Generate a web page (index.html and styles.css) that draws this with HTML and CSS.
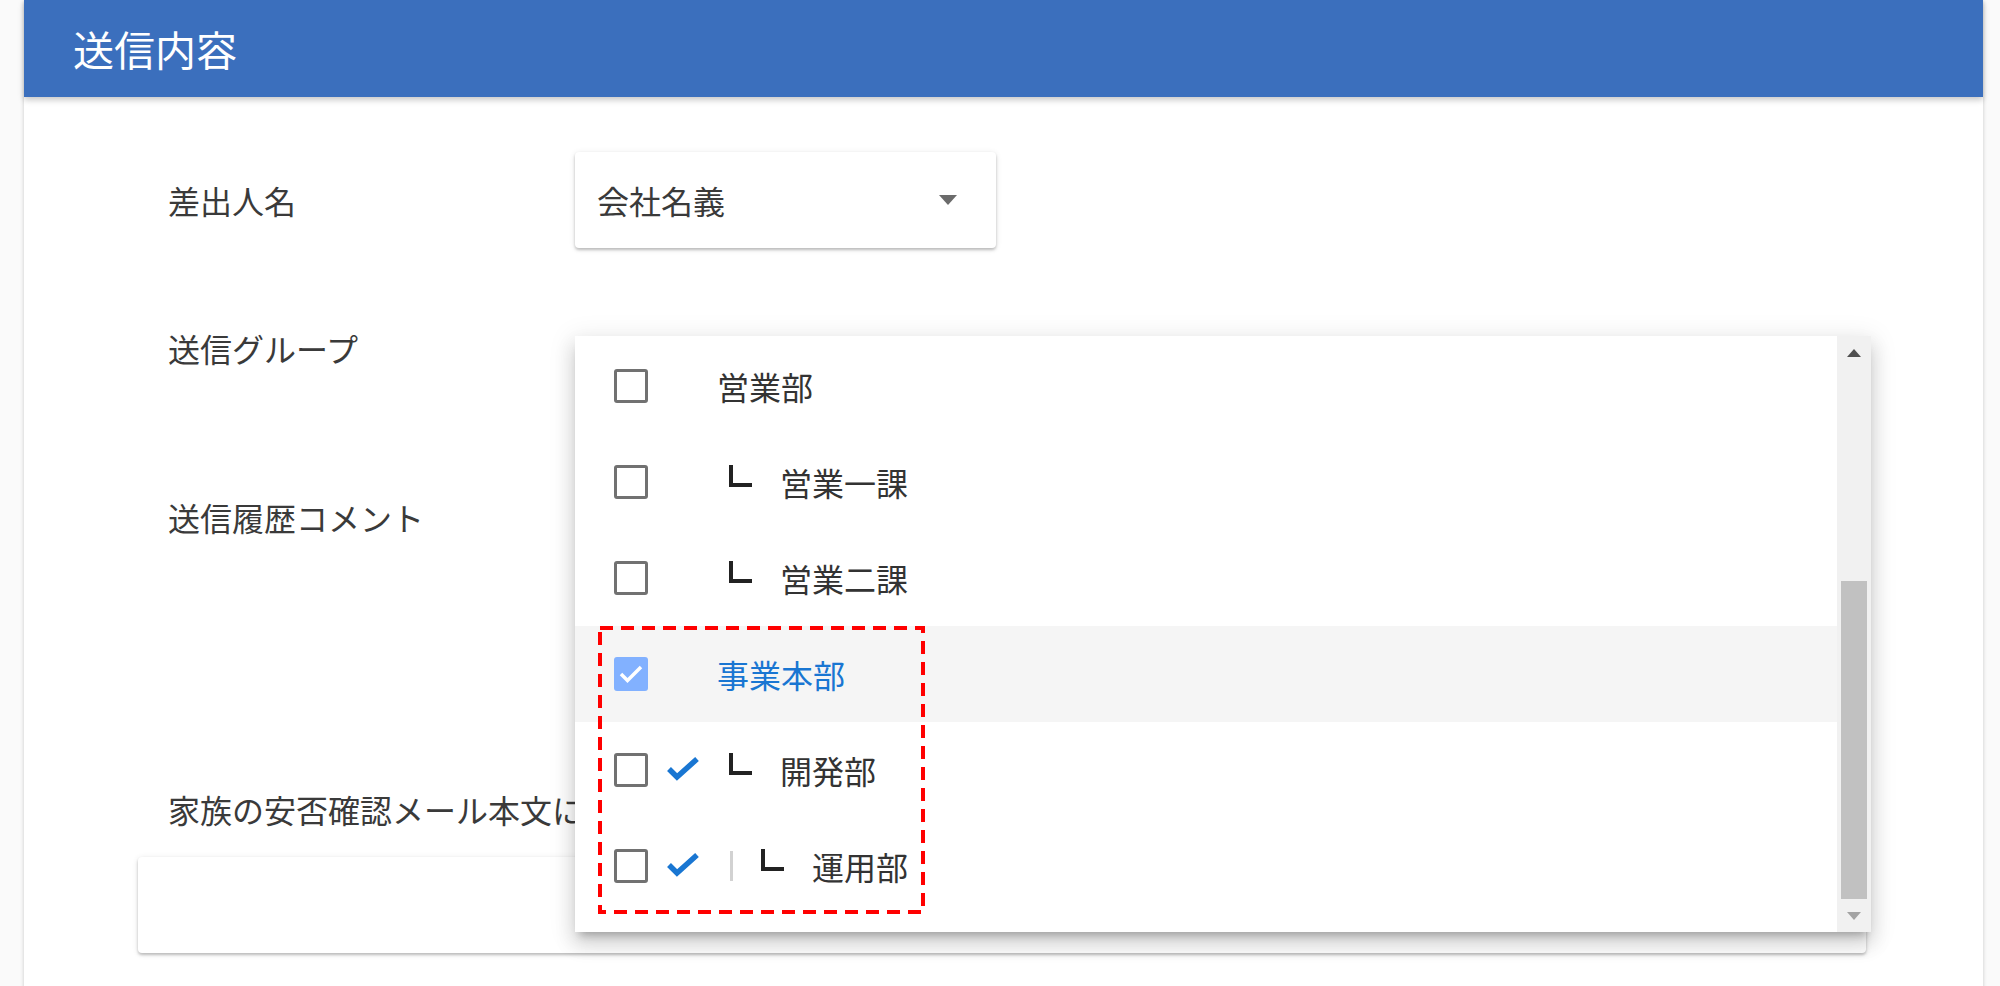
FILE: index.html
```html
<!DOCTYPE html>
<html lang="ja">
  <head>
    <meta charset="UTF-8" />
    <meta name="viewport" content="width=device-width, initial-scale=1.0" />
    <title>送信内容</title>
    <link rel="stylesheet" href="styles.css">
  </head>
  <body>
    <div class="card">
      <div class="card-header">送信内容</div>
      <div class="card-body">
        <div class="form-row row-sender">
          <div class="form-label">差出人名</div>
          <div class="select-box">
            <span>会社名義</span>
            <span class="caret"></span>
          </div>
        </div>
        <div class="form-row row-group">
          <div class="form-label">送信グループ</div>
        </div>
        <div class="form-row row-comment">
          <div class="form-label">送信履歴コメント</div>
        </div>
        <div class="form-label label-family">家族の安否確認メール本文に</div>
        <div class="text-box"></div>

        <!-- 送信グループ dropdown (open) -->
        <div class="group-menu">
          <div class="menu-list">
            <div class="menu-item">
              <span class="cb"></span>
              <span class="mark"></span>
              <span class="item-label">営業部</span>
            </div>
            <div class="menu-item">
              <span class="cb"></span>
              <span class="mark"></span>
              <span class="item-label"><span class="branch"></span>営業一課</span>
            </div>
            <div class="menu-item">
              <span class="cb"></span>
              <span class="mark"></span>
              <span class="item-label"><span class="branch"></span>営業二課</span>
            </div>
            <div class="menu-item hover">
              <span class="cb checked">
                <svg viewBox="0 0 34 34" width="34" height="34"><polyline points="7,17 13.5,23.5 27,10" fill="none" stroke="#fff" stroke-width="3.5"/></svg>
              </span>
              <span class="mark"></span>
              <span class="item-label selected">事業本部</span>
            </div>
            <div class="menu-item">
              <span class="cb"></span>
              <span class="mark">
                <svg viewBox="0 0 42 42" width="42" height="42"><polyline points="7,20 15,28 35,10" fill="none" stroke="#1976d2" stroke-width="5.5"/></svg>
              </span>
              <span class="item-label"><span class="branch"></span>開発部</span>
            </div>
            <div class="menu-item">
              <span class="cb"></span>
              <span class="mark">
                <svg viewBox="0 0 42 42" width="42" height="42"><polyline points="7,20 15,28 35,10" fill="none" stroke="#1976d2" stroke-width="5.5"/></svg>
              </span>
              <span class="item-label"><span class="pipe"></span><span class="branch"></span>運用部</span>
            </div>
          </div>
          <div class="menu-scroll">
            <span class="scroll-btn"><span class="arrow-up"></span></span>
            <span class="scroll-track"><span class="scroll-thumb"></span></span>
            <span class="scroll-btn"><span class="arrow-down"></span></span>
          </div>
          <div class="focus-frame">
            <svg viewBox="0 0 327 288" width="327" height="288"><rect x="2" y="2" width="323" height="284" fill="none" stroke="#ff0000" stroke-width="4" stroke-dasharray="13 8"/></svg>
          </div>
        </div>
      </div>
    </div>
  </body>
</html>
```

FILE: styles.css
```css
* {
  box-sizing: border-box;
}
html,
body {
  margin: 0;
  height: 986px;
  overflow: hidden;
}
body {
  background-color: #fafafa;
  font-family: "Noto Sans CJK JP", "Noto Sans", sans-serif;
  color: #3a3a3a;
}
.card {
  margin-left: 24px;
  width: 1959px;
  min-height: 1000px;
  background-color: #fff;
  box-shadow: 0 1px 4px rgba(0, 0, 0, 0.2);
}
.card-header {
  height: 97px;
  line-height: 97px;
  padding-left: 49px;
  background-color: #3b6fbd;
  color: #fff;
  font-size: 41px;
  box-shadow: 0 3px 6px rgba(0, 0, 0, 0.22);
  position: relative;
  z-index: 1;
}
.card-body {
  position: relative;
  padding-top: 55px;
}
.form-row {
  display: flex;
  align-items: center;
  height: 96px;
  padding-left: 144px;
}
.form-label {
  width: 407px;
  font-size: 32px;
  line-height: 48px;
  white-space: nowrap;
}
.row-group {
  margin-top: 52px;
}
.row-comment {
  margin-top: 73px;
}
.label-family {
  margin-top: 220px;
  padding-left: 144px;
  width: auto;
}
.select-box {
  width: 421px;
  height: 96px;
  display: flex;
  align-items: center;
  justify-content: space-between;
  padding: 0 39px 0 22px;
  font-size: 32px;
  border-radius: 4px;
  background-color: #fff;
  box-shadow: 0 2px 3px rgba(0, 0, 0, 0.22), 0 1px 6px rgba(0, 0, 0, 0.1);
}
.caret {
  width: 0;
  height: 0;
  border-left: 9.5px solid transparent;
  border-right: 9.5px solid transparent;
  border-top: 10px solid #6b6b6b;
}
.text-box {
  margin-top: 24px;
  margin-left: 114px;
  width: 1728px;
  height: 96px;
  border-radius: 4px;
  background-color: #fff;
  box-shadow: 0 2px 3px rgba(0, 0, 0, 0.22), 0 1px 6px rgba(0, 0, 0, 0.1);
}

/* dropdown */
.group-menu {
  position: absolute;
  left: 551px;
  top: 239px;
  width: 1296px;
  height: 596px;
  display: flex;
  background-color: #fff;
  z-index: 2;
  box-shadow: 0 8px 8px -5px rgba(0, 0, 0, 0.25), 0 12px 18px 2px rgba(0, 0, 0, 0.12),
    0 4px 24px 4px rgba(0, 0, 0, 0.08);
}
.menu-list {
  flex: 1;
  padding-top: 2px;
  overflow: hidden;
}
.menu-item {
  height: 96px;
  display: flex;
  align-items: center;
  padding-left: 39px;
}
.menu-item.hover {
  background-color: #f5f5f5;
}
.cb {
  flex: none;
  width: 34px;
  height: 34px;
  border: 3px solid #717171;
  border-radius: 3px;
}
.cb.checked {
  border: none;
  background-color: #82b1ff;
}
.cb svg {
  display: block;
}
.mark {
  flex: none;
  width: 42px;
  height: 42px;
  margin-left: 14px;
}
.mark svg {
  display: block;
}
.item-label {
  margin-left: 13px;
  display: flex;
  align-items: center;
  font-size: 32px;
  line-height: 48px;
  color: #333;
}
.item-label.selected {
  color: #1976d2;
}
.branch {
  flex: none;
  width: 63px;
  height: 32px;
  display: flex;
  align-items: center;
}
.branch::before {
  content: "";
  width: 19px;
  height: 18px;
  margin-left: 12px;
  margin-top: -12px;
  border-left: 4px solid #222;
  border-bottom: 4px solid #222;
}
.pipe {
  flex: none;
  width: 32px;
  height: 32px;
  display: flex;
  align-items: center;
}
.pipe::before {
  content: "";
  width: 3px;
  height: 30px;
  margin-left: 13px;
  background-color: #d2d2d2;
}
.menu-scroll {
  flex: none;
  width: 34px;
  display: flex;
  flex-direction: column;
  background-color: #f1f1f1;
}
.scroll-btn {
  height: 33px;
  display: flex;
  align-items: center;
  justify-content: center;
}
.arrow-up {
  width: 0;
  height: 0;
  border-left: 7.5px solid transparent;
  border-right: 7.5px solid transparent;
  border-bottom: 8px solid #505050;
}
.arrow-down {
  width: 0;
  height: 0;
  border-left: 7.5px solid transparent;
  border-right: 7.5px solid transparent;
  border-top: 8px solid #a3a3a3;
}
.scroll-track {
  flex: 1;
  display: flex;
  flex-direction: column;
  justify-content: flex-end;
  padding: 0 4px;
}
.scroll-thumb {
  height: 318px;
  background-color: #c1c1c1;
}
.focus-frame {
  position: absolute;
  left: 23px;
  top: 290px;
  width: 327px;
  height: 288px;
  pointer-events: none;
}
.focus-frame svg {
  display: block;
}
```
